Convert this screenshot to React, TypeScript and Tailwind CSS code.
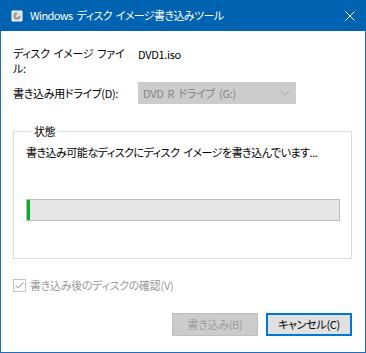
import React from "react";

function DiscIcon() {
  return (
    <svg width="12" height="12" viewBox="0 0 12 12" aria-hidden="true">
      <rect x="0.5" y="0.5" width="11" height="11" rx="1" fill="#f2f2f2" />
      <circle cx="6" cy="6" r="4.5" fill="#c8c8c8" />
      <circle cx="6" cy="6" r="3.2" fill="#9a9a9a" />
      <circle cx="6" cy="6" r="1.2" fill="#f2f2f2" />
      <path d="M6 1.5 A4.5 4.5 0 0 1 10.5 6 L6 6 Z" fill="#e0e0e0" />
    </svg>
  );
}

function CloseIcon() {
  return (
    <svg width="10" height="10" viewBox="0 0 10 10" aria-hidden="true">
      <path d="M0.5 0.5 L9.5 9.5 M9.5 0.5 L0.5 9.5" stroke="#ffffff" strokeWidth="1" />
    </svg>
  );
}

function Chevron() {
  return (
    <svg width="10" height="6" viewBox="0 0 10 6" aria-hidden="true">
      <path d="M0.5 0.5 L5 5 L9.5 0.5" fill="none" stroke="#a8a8a8" strokeWidth="1" />
    </svg>
  );
}

function DisabledCheck() {
  return (
    <svg width="13" height="13" viewBox="0 0 13 13" aria-hidden="true">
      <rect x="0.5" y="0.5" width="12" height="12" fill="#ffffff" stroke="#c4c4c4" />
      <path d="M2.5 6.5 L5 9 L10.5 3.5" fill="none" stroke="#b4b4b4" strokeWidth="1.2" />
    </svg>
  );
}

export default function App() {
  const progress = 1;

  return (
    <div className="w-[366px] h-[353px] flex flex-col bg-white text-[11px] leading-[15px] tracking-[-0.3px] [word-spacing:2px] text-black whitespace-nowrap font-['Noto_Sans_CJK_JP','Noto_Sans',sans-serif] [font-feature-settings:'palt']">
      {/* title bar */}
      <div className="h-[31px] shrink-0 bg-[#0063b1] flex items-center pl-[11px] pr-[11px] text-white tracking-[-0.6px]">
        <DiscIcon />
        <span className="ml-[7px] flex-1">Windows ディスク イメージ書き込みツール</span>
        <CloseIcon />
      </div>

      <div className="flex-1 flex flex-col border-x border-b border-[#1f6fbf] pl-[12px] pr-[13px] pt-[15px]">
        <div className="flex">
          <div className="w-[125px]">
            ディスク イメージ ファイ
            <br />
            ル:
          </div>
          <div className="pt-[1px]">DVD1.iso</div>
        </div>

        <div className="flex items-center mt-[6px]">
          <div className="w-[125px]">書き込み用ドライブ(D):</div>
          <div className="w-[158px] h-[22px] bg-[#cccccc] flex items-center justify-between pl-[5px] pr-[6px] text-[#838383]">
            <span>DVD R ドライブ (G:)</span>
            <Chevron />
          </div>
        </div>

        <fieldset className="mt-[20px] border border-[#dcdcdc] pl-[12px] pr-[11px] pt-[6px] pb-[37px]">
          <legend className="ml-[5px] px-[3px]">状態</legend>
          <p className="tracking-[-0.5px]">書き込み可能なディスクにディスク イメージを書き込んでいます...</p>
          <div className="mt-[39px] h-[22px] border border-[#bcbcbc] bg-[#e6e6e6]">
            <div className="h-full bg-[#06b025]" style={{ width: `${progress}%` }} />
          </div>
        </fieldset>

        <div className="flex items-center mt-[19px] text-[#9a9a9a]">
          <DisabledCheck />
          <span className="ml-[4px]">書き込み後のディスクの確認(V)</span>
        </div>

        <div className="flex justify-end gap-[8px] mt-auto mb-[16px]">
          <button
            disabled
            className="w-[86px] h-[23px] bg-[#cccccc] border border-[#bfbfbf] text-[#9d9d9d]"
          >
            書き込み(B)
          </button>
          <button className="w-[86px] h-[23px] bg-[#e1e1e1] border-2 border-[#0078d7] text-black">
            キャンセル(C)
          </button>
        </div>
      </div>
    </div>
  );
}
